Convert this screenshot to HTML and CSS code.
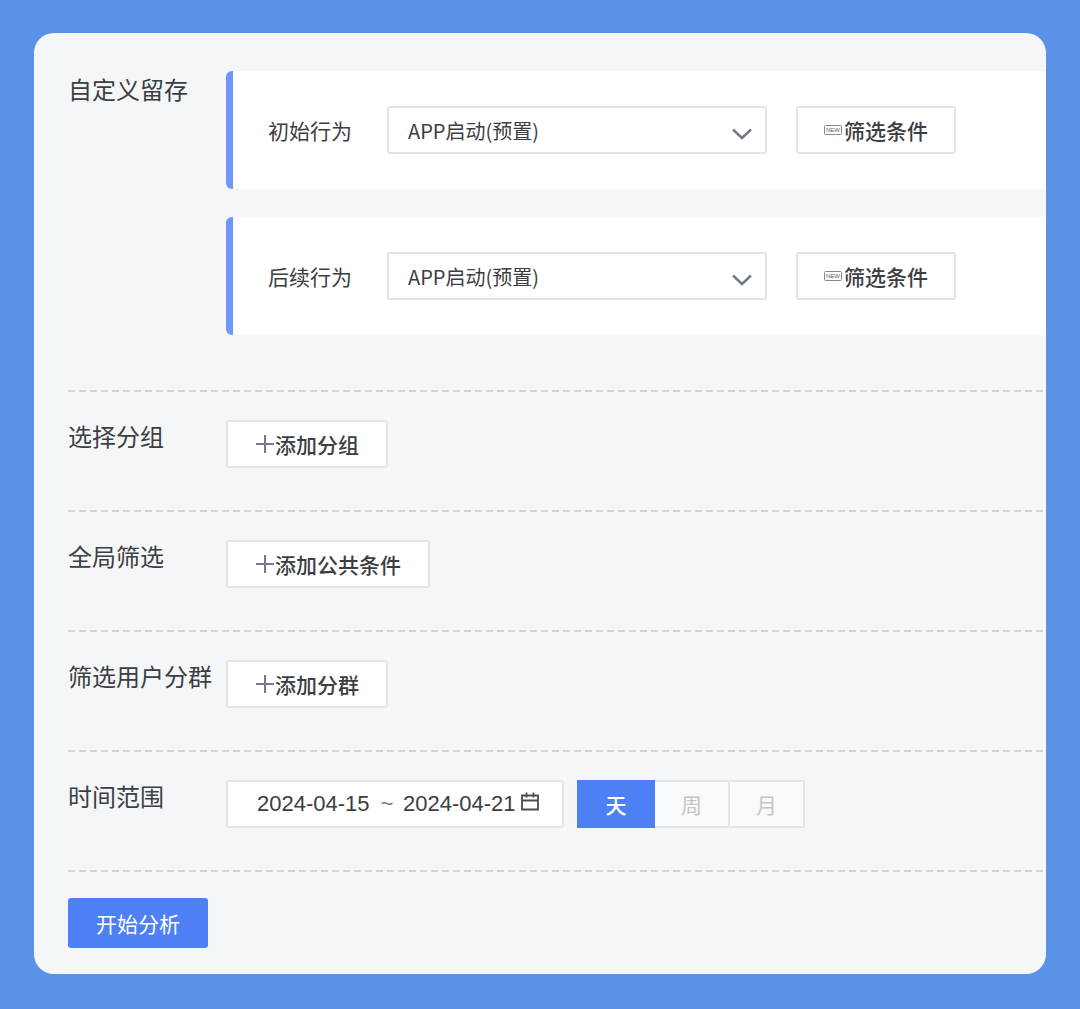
FILE: index.html
```
<!DOCTYPE html>
<html lang="zh-CN">
<head>
  <meta charset="UTF-8" />
  <meta name="viewport" content="width=device-width, initial-scale=1.0"/>
  <title>留存分析</title>
  <link rel="stylesheet" href="styles.css">
</head>
<body>

  <form class="panel">

    <!-- Retention events -->
    <section class="row row-events">
      <h2 class="row-label">自定义留存</h2>
      <div class="events">
        <div class="event">
          <label for="first-event">初始行为</label>
          <div class="select-box">
            <select id="first-event">
              <option>APP启动(预置)</option>
            </select>
            <svg class="arrow" viewBox="0 0 22 14"><path d="M2 2.5 11 11 20 2.5"/></svg>
          </div>
          <button type="button" class="btn btn-filter">
            <span class="new-tag">
              <svg viewBox="0 0 18 10"><rect x="0.5" y="0.5" width="17" height="9" rx="1"/><text x="9" y="7">NEW</text></svg>
            </span>筛选条件
          </button>
        </div>
        <div class="event">
          <label for="next-event">后续行为</label>
          <div class="select-box">
            <select id="next-event">
              <option>APP启动(预置)</option>
            </select>
            <svg class="arrow" viewBox="0 0 22 14"><path d="M2 2.5 11 11 20 2.5"/></svg>
          </div>
          <button type="button" class="btn btn-filter">
            <span class="new-tag">
              <svg viewBox="0 0 18 10"><rect x="0.5" y="0.5" width="17" height="9" rx="1"/><text x="9" y="7">NEW</text></svg>
            </span>筛选条件
          </button>
        </div>
      </div>
    </section>

    <!-- Group by -->
    <section class="row">
      <h2 class="row-label">选择分组</h2>
      <button type="button" class="btn">
        <svg class="plus" viewBox="0 0 20 20"><path d="M10 1v18M1 10h18"/></svg>添加分组
      </button>
    </section>

    <!-- Global filter -->
    <section class="row">
      <h2 class="row-label">全局筛选</h2>
      <button type="button" class="btn">
        <svg class="plus" viewBox="0 0 20 20"><path d="M10 1v18M1 10h18"/></svg>添加公共条件
      </button>
    </section>

    <!-- User segments -->
    <section class="row">
      <h2 class="row-label">筛选用户分群</h2>
      <button type="button" class="btn">
        <svg class="plus" viewBox="0 0 20 20"><path d="M10 1v18M1 10h18"/></svg>添加分群
      </button>
    </section>

    <!-- Time range -->
    <section class="row">
      <h2 class="row-label">时间范围</h2>
      <div class="date-range">
        <input type="text" value="2024-04-15" aria-label="开始日期">
        <span class="tilde">~</span>
        <input type="text" value="2024-04-21" aria-label="结束日期">
        <svg class="calendar" viewBox="0 0 20 20"><path d="M2 3.5h16v14H2zM2 8.5h16M6.5 0.5v5M13.5 0.5v5"/></svg>
      </div>
      <div class="units">
        <button type="button" class="active">天</button>
        <button type="button">周</button>
        <button type="button">月</button>
      </div>
    </section>

    <button type="submit" class="submit-btn">开始分析</button>
  </form>

</body>
</html>
```
FILE: styles.css
```
* { margin: 0; padding: 0; box-sizing: border-box; }

body {
  min-height: 100vh;
  padding: 33px 34px 35px;
  background: #5a92e6;
  font-family: "Noto Sans CJK SC", sans-serif;
  font-size: 21px;
  color: #3c3e42;
}

button, input, select { font: inherit; color: inherit; }
button { cursor: pointer; }

.panel {
  padding: 38px 0 26px 34px;
  background: #f4f6f8;
  border-radius: 20px;
  overflow: hidden;
}

.row {
  display: flex;
  align-items: flex-start;
  padding: 28px 0 44px;
  /* dashed divider */
  background: repeating-linear-gradient(to right, #d2d4d6 0 7px, transparent 7px 11px) left bottom / 100% 2px no-repeat;
}
.row-events { padding: 0 0 57px; }

.row-label {
  flex: none;
  width: 158px;
  font-size: 24px;
  font-weight: 400;
  line-height: 32px;
}
.row-events .row-label { line-height: 36px; }

/* Event blocks */
.events {
  flex: 1;
  display: flex;
  flex-direction: column;
  gap: 28px;
}

.event {
  display: flex;
  align-items: center;
  padding: 35px;
  background: #fff;
  border-left: 7px solid #6d98f8;
  border-radius: 6px 0 0 6px;
}
.event label { margin-right: 35px; white-space: nowrap; }

.select-box {
  position: relative;
  flex: 0 1 380px;
  margin-right: 29px;
}
.select-box select {
  display: block;
  width: 100%;
  height: 48px;
  padding: 0 48px 0 19px;
  background: #fff;
  border: 2px solid #e3e4e5;
  border-radius: 3px;
  appearance: none;
  font-size: 20px;
}
.arrow {
  position: absolute;
  right: 14px; top: 21px;
  width: 22px; height: 14px;
  fill: none; stroke: #757a8a; stroke-width: 2.5;
  pointer-events: none;
}

/* Buttons */
.btn {
  display: flex;
  align-items: center;
  height: 48px;
  padding: 0 27px;
  background: #fff;
  border: 2px solid #e3e4e5;
  border-radius: 3px;
  font-weight: 500;
  white-space: nowrap;
}
.btn-filter { padding: 0 26px; }

.plus {
  width: 20px; height: 20px;
  fill: none; stroke: #757a94; stroke-width: 2;
}

.new-tag { display: flex; margin-right: 2px; }
.new-tag svg { width: 18px; height: 10px; }
.new-tag rect { fill: none; stroke: #85878c; }
.new-tag text {
  font-family: "Liberation Sans", sans-serif;
  font-size: 6px;
  text-anchor: middle;
  fill: #606268;
}

/* Date range */
.date-range {
  display: flex;
  align-items: center;
  height: 48px;
  padding: 0 22px 0 29px;
  margin-right: 13px;
  background: #fff;
  border: 2px solid #e3e4e5;
  border-radius: 3px;
  font-family: "Liberation Sans", sans-serif;
  font-size: 22px;
}
.date-range input {
  width: 114px;
  border: none;
  outline: none;
  background: none;
}
.tilde { width: 32px; text-align: center; color: #757a94; }
.calendar {
  width: 20px; height: 20px;
  margin: 0 0 4px 3px;
  fill: none; stroke: #4a4c52; stroke-width: 1.8;
}

.units { display: flex; }
.units button {
  width: 75px; height: 48px;
  background: #f9fafc;
  border: 2px solid #e3e4e5;
  border-left: none;
  color: #c3c5c9;
}
.units .active {
  width: 78px;
  background: #4e80f5;
  border: none;
  color: #fff;
  font-weight: 500;
}

.submit-btn {
  display: block;
  height: 50px;
  margin-top: 26px;
  padding: 0 28px;
  background: #4e80f5;
  border: none;
  border-radius: 3px;
  color: #fff;
}
```
